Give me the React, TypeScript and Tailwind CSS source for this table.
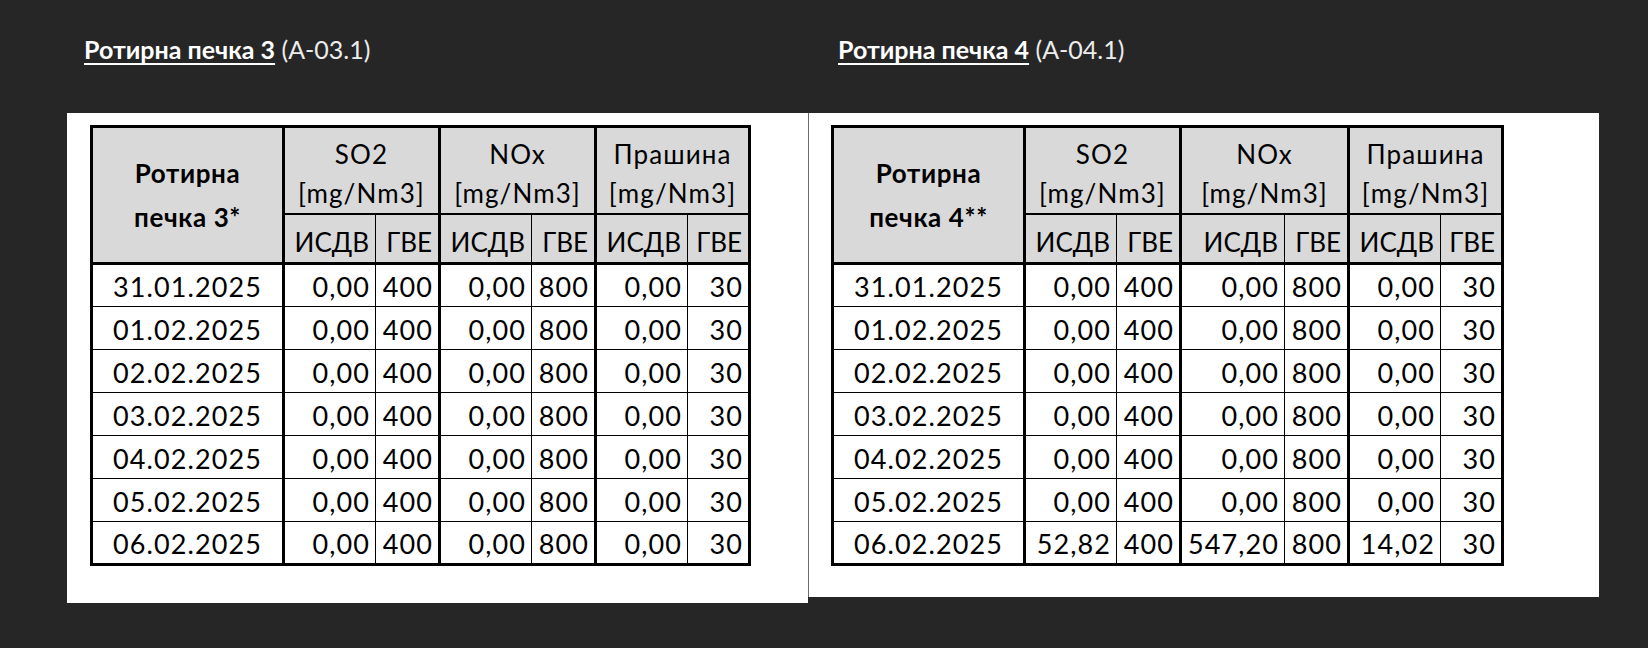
import React from "react";

const DATES = [
  "31.01.2025",
  "01.02.2025",
  "02.02.2025",
  "03.02.2025",
  "04.02.2025",
  "05.02.2025",
  "06.02.2025",
];

const GROUPS = ["SO2", "NOx", "Прашина"];

type KilnTableProps = {
  label: string;
  widths: number[];
  rows: string[][];
};

function KilnTable({ label, widths, rows }: KilnTableProps) {
  const total = widths.reduce((a, b) => a + b, 0) + 3;

  return (
    <table
      className="table-fixed border-collapse border-[3px] border-black text-[27px] leading-[31px] tracking-[1.1px] text-black"
      style={{ width: total }}
    >
      <colgroup>
        {widths.map((w, i) => (
          <col key={i} style={{ width: w }} />
        ))}
      </colgroup>
      <thead>
        <tr className="h-[87px] bg-[#d9d9d9]">
          <th
            rowSpan={2}
            className="border-[3px] border-black text-center text-[26px] font-bold leading-[44px] tracking-[0.6px]"
          >
            Ротирна
            <br />
            {label}
          </th>
          {GROUPS.map((g) => (
            <th
              key={g}
              colSpan={2}
              className="border-t-[3px] border-b-2 border-l-[3px] border-r-[3px] border-black pt-[7px] text-center text-[26px] font-normal leading-[39px]"
            >
              {g}
              <br />
              [mg/Nm3]
            </th>
          ))}
        </tr>
        <tr className="h-[49px] bg-[#d9d9d9]">
          {GROUPS.map((g) => (
            <React.Fragment key={g}>
              <th className="border border-b-[3px] border-l-[3px] border-black pr-[6px] pt-[9px] text-right text-[26px] font-normal tracking-normal">
                ИСДВ
              </th>
              <th className="border border-b-[3px] border-black pr-[6px] pt-[9px] text-right text-[26px] font-normal tracking-normal">
                ГВЕ
              </th>
            </React.Fragment>
          ))}
        </tr>
      </thead>
      <tbody>
        {rows.map((row) => (
          <tr key={row[0]} className="h-[43px] bg-white">
            {row.map((cell, i) => (
              <td
                key={i}
                className={`border border-black pt-[3px] ${
                  i === 0 ? "border-r-[3px] text-center" : "pr-[5px] text-right"
                } ${i === 1 || i === 3 || i === 5 ? "border-l-[3px]" : ""}`}
              >
                {cell}
              </td>
            ))}
          </tr>
        ))}
      </tbody>
    </table>
  );
}

function Title({ name, code }: { name: string; code: string }) {
  return (
    <p className="text-[25px] leading-[28px] text-white">
      <span className="font-bold underline decoration-[2px] underline-offset-[4px]">{name}</span>{" "}
      <span className="text-[#ececec]">{code}</span>
    </p>
  );
}

export default function App() {
  const zeroRows = DATES.map((d) => [d, "0,00", "400", "0,00", "800", "0,00", "30"]);
  const rightRows = DATES.map((d, i) =>
    i === DATES.length - 1
      ? [d, "52,82", "400", "547,20", "800", "14,02", "30"]
      : [d, "0,00", "400", "0,00", "800", "0,00", "30"]
  );

  return (
    <div className="flex h-[648px] w-full bg-[#262626] pl-[67px] font-['Lato',sans-serif]">
      {/* left kiln */}
      <div className="flex w-[741px] flex-col">
        <div className="h-[113px] pl-[17px] pt-[35px]">
          <Title name="Ротирна печка 3" code="(А-03.1)" />
        </div>
        <div className="h-[490px] bg-white pl-[23px] pt-[12px]">
          <KilnTable label="печка 3*" widths={[192, 92, 64, 92, 64, 92, 62]} rows={zeroRows} />
        </div>
      </div>

      {/* right kiln */}
      <div className="flex w-[791px] flex-col">
        <div className="h-[113px] pl-[30px] pt-[35px]">
          <Title name="Ротирна печка 4" code="(А-04.1)" />
        </div>
        <div className="h-[484px] border-l border-[#6b6b6b] bg-white pl-[22px] pt-[12px]">
          <KilnTable label="печка 4**" widths={[192, 92, 64, 104, 64, 92, 62]} rows={rightRows} />
        </div>
      </div>
    </div>
  );
}
